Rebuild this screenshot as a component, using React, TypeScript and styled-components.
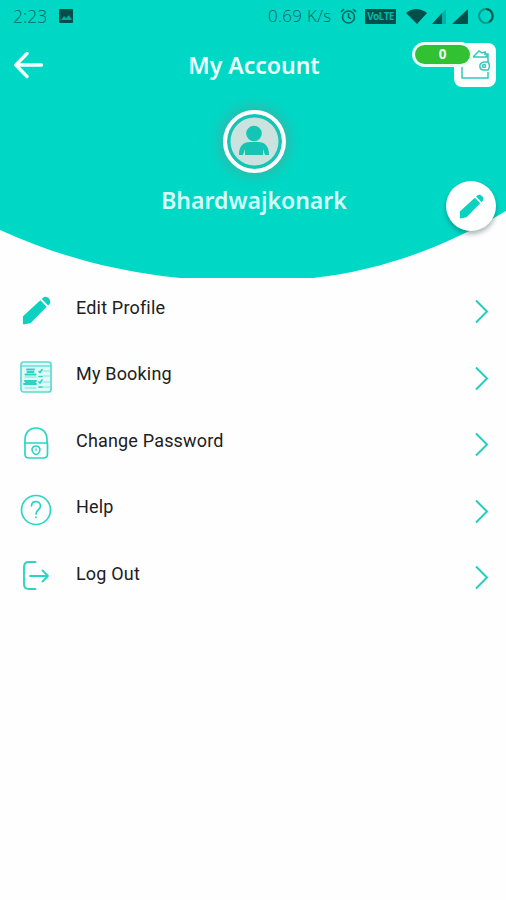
import React from "react";
import styled, { createGlobalStyle } from "styled-components";

const TEAL = "#00d8c6";
const INK = "#00655f";

const GlobalStyle = createGlobalStyle`
  *, *::before, *::after { box-sizing: border-box; }
  body { margin: 0; background: #fefefe; }
  svg { display: block; flex: none; }
`;

const Screen = styled.main`
  width: 506px;
  height: 900px;
  display: flex;
  flex-direction: column;
  background: #fefefe;
  font-family: Roboto, "Noto Sans", sans-serif;
  overflow: hidden;
`;

const Header = styled.header`
  position: relative;
  z-index: 0;
  height: 278px;
  display: flex;
  flex-direction: column;
  align-items: center;
`;

const Backdrop = styled.svg`
  position: absolute;
  inset: 0;
  z-index: -1;
`;

const StatusBar = styled.div`
  width: 100%;
  height: 32px;
  padding: 0 11px 0 13px;
  display: flex;
  align-items: center;
  color: ${INK};
  font: 400 17px/32px "Open Sans", "Noto Sans", sans-serif;
`;

const Clock = styled.span`
  width: 46px;
  font-weight: 350;
  font-size: 17.5px;
`;

const Speed = styled.span`
  margin-left: auto;
  width: 72px;
  font-weight: 350;
  font-size: 17px;
  letter-spacing: 0.3px;
  white-space: nowrap;
`;

const Lte = styled.span`
  width: 31px;
  height: 15px;
  margin: 0 9px 0 8px;
  background: #004f4b;
  color: #00b9ab;
  font: 700 10px/15px "Open Sans", sans-serif;
  letter-spacing: -0.6px;
  text-align: center;
`;

const TitleBar = styled.div`
  width: 100%;
  height: 66px;
  padding: 0 10px 0 14px;
  display: grid;
  grid-template-columns: 84px 1fr 84px;
  align-items: center;
`;

const BackButton = styled.button`
  padding: 0;
  border: 0;
  background: none;
`;

const Title = styled.h1`
  margin: 0 0 0 -2px;
  color: #effffc;
  font: 600 23px/30px "Noto Sans", sans-serif;
  text-align: center;
  white-space: nowrap;
`;

const Wallet = styled.div`
  position: relative;
  justify-self: end;
  width: 42px;
  height: 44px;
  border-radius: 8px;
  background: #fdffff;
`;

const Balance = styled.span`
  position: absolute;
  left: -42px;
  top: -1px;
  width: 61px;
  height: 25px;
  border: 3px solid #e9fff5;
  border-radius: 13px;
  background: #32c132;
  color: #effff0;
  font: 700 13.5px/19px "Noto Sans", sans-serif;
  text-align: center;
`;

const Avatar = styled.div`
  width: 63px;
  height: 63px;
  margin: 12px 0 0 2px;
  border: 4px solid #fff;
  border-radius: 50%;
  background: #cbe3df;
  box-shadow: inset 0 0 0 3.5px #14c5b5, 0 0 14px 3px rgba(110, 145, 135, 0.5);
`;

const UserName = styled.h2`
  margin: 12px 0 0 2px;
  color: #d5fff8;
  font: 600 23px/30px "Noto Sans", sans-serif;
  white-space: nowrap;
`;

const EditButton = styled.button`
  position: absolute;
  left: 446px;
  top: 181px;
  width: 50px;
  height: 50px;
  padding: 0;
  display: grid;
  place-items: center;
  border: 0;
  border-radius: 50%;
  background: #fff;
  box-shadow: 0 3px 5px rgba(0, 50, 45, 0.36);
`;

const Menu = styled.nav`
  display: flex;
  flex-direction: column;
`;

const MenuRow = styled.a`
  height: 66.5px;
  padding: 0 16px 0 19px;
  display: grid;
  grid-template-columns: 57px 1fr 16px;
  align-items: center;
  color: #202020;
`;

const IconSlot = styled.span`
  width: 34px;
  margin-top: -2px;
  display: grid;
  place-items: center;
`;

const Label = styled.span`
  margin-top: -7px;
  font-size: 18px;
  line-height: 24px;
  letter-spacing: 0.18px;
`;

const Pencil = ({ size }: { size: number }) => (
  <svg width={size} height={size} viewBox="0 0 30 30" fill="#0bd2c0">
    <path d="M1 21 19 4.500l6.500 6.500L9 28l-7 1.500q-1 0-1-1Z" />
    <path d="m20.500 3 1-1c2-2 5-1 6.500.8s2 4.200 0 6l-1 1Z" />
  </svg>
);

const LineIcon = styled.svg.attrs({ width: 34, height: 34, viewBox: "0 0 34 34" })`
  fill: none;
  stroke: #2bd5c4;
  stroke-width: 1.7;
  stroke-linecap: round;
  stroke-linejoin: round;
`;

const BookingIcon = () => (
  <LineIcon>
    <rect x="2" y="2" width="30" height="30" rx="2.500" fill="#e2faf7" stroke="#58dccf" />
    <path d="M3 6h28" strokeWidth="1" />
    <path d="M8 9.500h7M8.500 12h6M6.500 14.500h10" strokeWidth="2" />
    <path d="M6 21h11M5 24h12M7 22.500h9" strokeWidth="2" />
    <path d="M6 17h11M6 28h11" stroke="#75e1d7" strokeWidth="1" />
    <path d="M24 11h7M24 16h7M24 22h7M24 27h7" stroke="#82e4da" strokeWidth="1.200" />
    <path d="m20 11.500 1 1 2-3m-3 7h3m-3 5.500 1 1 2-3m-3 7h3" strokeWidth="1.700" />
  </LineIcon>
);

const LockIcon = () => (
  <LineIcon>
    <path d="M6 17v-3C6 6.500 10.500 2 17 2s11 4.500 11 12v3" />
    <path d="M6 17h22.500v11q0 4-4 4H10q-4 0-4-4Z" />
    <path d="M15 27.500c-3.500-3.500-2-7.500 2-7.500s5.500 4 2 7.500q-2 2-4 0Z" strokeWidth="1.500" />
    <path d="M17 23v1.500" strokeWidth="1.300" />
  </LineIcon>
);

const HelpIcon = () => (
  <LineIcon>
    <circle cx="17" cy="17" r="14.500" />
    <path d="M12.500 13c.2-6 9-5.500 9 0 0 4-4.500 3.500-4.500 8m0 3v.4" />
  </LineIcon>
);

const LogoutIcon = () => (
  <LineIcon>
    <path d="M16.500 3H10Q5 3 5 8v17q0 5 5 5h6.500M11 17h18m-5.500-5.500L29 17l-5.500 5.500" strokeWidth="1.900" />
  </LineIcon>
);

const items = [
  { label: "Edit Profile", icon: <Pencil size={29} /> },
  { label: "My Booking", icon: <BookingIcon /> },
  { label: "Change Password", icon: <LockIcon /> },
  { label: "Help", icon: <HelpIcon /> },
  { label: "Log Out", icon: <LogoutIcon /> },
];

const StatusIcons = () => (
  <svg width="90" height="20" viewBox="0 0 90 20">
    <path d="M1 7Q11-1 22 7L12 18Z" fill="#004f4b" />
    <path d="M27 18 41 3v15Z" fill="#00b2a5" />
    <path d="M27 18 37 7v11Z" fill="#004f4b" />
    <path d="M47 18 63 3v15Z" fill="#004f4b" />
    <circle cx="81" cy="10" r="7" fill="none" stroke="#02998e" strokeWidth="2" />
    <path d="M81 3a7 7 0 0 1 3 13" fill="none" stroke="#00564f" strokeWidth="2" />
  </svg>
);

export default function App() {
  return (
    <Screen>
      <GlobalStyle />
      <Header>
        <Backdrop width="506" height="278" viewBox="0 0 506 278">
          <path d="M0 0H506V211C446 246 385 270 313 278H180C110 271 50 253 0 230Z" fill={TEAL} />
        </Backdrop>
        <StatusBar>
          <Clock>2:23</Clock>
          <svg width="14" height="14" viewBox="0 0 14 14">
            <rect width="14" height="14" rx="1" fill="#004f4b" />
            <path d="m2 11 3-4 2 2 3-3 3 5Z" fill="#00a99c" />
          </svg>
          <Speed>0.69 K/s</Speed>
          <svg width="17" height="17" viewBox="0 0 17 17" fill="none" stroke={INK} strokeWidth="1.600">
            <circle cx="8.500" cy="9" r="6" />
            <path d="M8.500 5v4l2.500 2M1 4l3-3m9 0 3 3" />
          </svg>
          <Lte>VoLTE</Lte>
          <StatusIcons />
        </StatusBar>
        <TitleBar>
          <BackButton aria-label="Back">
            <svg width="30" height="28" viewBox="0 0 30 28" fill="none" stroke="#f3fffd" strokeWidth="3.400" strokeLinecap="round" strokeLinejoin="round">
              <path d="M27.500 14H2M13 2.500 1.800 14 13 25.500" />
            </svg>
          </BackButton>
          <Title>My Account</Title>
          <Wallet>
            <svg width="42" height="44" viewBox="0 0 42 44" fill="none" stroke="#35c9bd" strokeWidth="1.500">
              <path d="M8 24v11h26v-6M34 19v-5H19m15 0v-3h-4M19 14l6-6 3 2 3-1 2 5" />
              <path d="M34 19h-4c-6 1-5 8 0 8h4q3-4 0-8Z" />
              <circle cx="30" cy="23" r="1.500" />
            </svg>
            <Balance>0</Balance>
          </Wallet>
        </TitleBar>
        <Avatar>
          <svg width="55" height="55" viewBox="0 0 55 55" fill="#14c5b5">
            <circle cx="27" cy="19.500" r="7.800" />
            <path d="M12 41c0-9 4-13 11-13h8c7 0 11 4 11 13h-4l-2-6v6H18v-6l-2 6Z" />
          </svg>
        </Avatar>
        <UserName>Bhardwajkonark</UserName>
        <EditButton aria-label="Edit profile">
          <Pencil size={25} />
        </EditButton>
      </Header>
      <Menu>
        {items.map(({ label, icon }) => (
          <MenuRow key={label}>
            <IconSlot>{icon}</IconSlot>
            <Label>{label}</Label>
            <svg width="16" height="26" viewBox="0 0 16 26" fill="none" stroke="#25cdbc" strokeWidth="2">
              <path d="m2 2.500 11 11-11 11" />
            </svg>
          </MenuRow>
        ))}
      </Menu>
    </Screen>
  );
}
